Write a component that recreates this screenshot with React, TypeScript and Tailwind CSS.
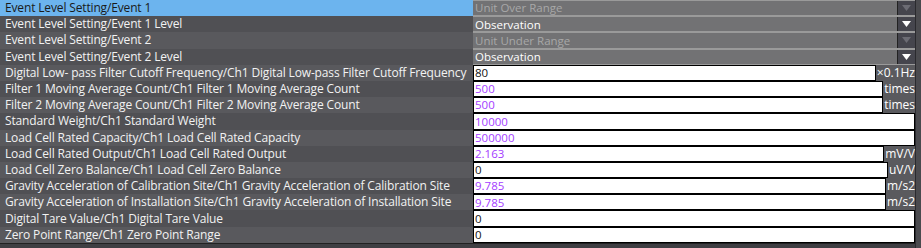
import React from "react";

type Row = {
  label: string;
  kind: "combo" | "input";
  value: string;
  disabled?: boolean;
  purple?: boolean;
  unit?: string;
};

const rows: Row[] = [
  { label: "Event Level Setting/Event 1", kind: "combo", value: "Unit Over Range", disabled: true },
  { label: "Event Level Setting/Event 1 Level", kind: "combo", value: "Observation" },
  { label: "Event Level Setting/Event 2", kind: "combo", value: "Unit Under Range", disabled: true },
  { label: "Event Level Setting/Event 2 Level", kind: "combo", value: "Observation" },
  { label: "Digital Low- pass Filter Cutoff Frequency/Ch1 Digital Low-pass Filter Cutoff Frequency", kind: "input", value: "80", unit: "×0.1Hz" },
  { label: "Filter 1 Moving Average Count/Ch1 Filter 1 Moving Average Count", kind: "input", value: "500", purple: true, unit: "times" },
  { label: "Filter 2 Moving Average Count/Ch1 Filter 2 Moving Average Count", kind: "input", value: "500", purple: true, unit: "times" },
  { label: "Standard Weight/Ch1 Standard Weight", kind: "input", value: "10000", purple: true },
  { label: "Load Cell Rated Capacity/Ch1 Load Cell Rated Capacity", kind: "input", value: "500000", purple: true },
  { label: "Load Cell Rated Output/Ch1 Load Cell Rated Output", kind: "input", value: "2.163", purple: true, unit: "mV/V" },
  { label: "Load Cell Zero Balance/Ch1 Load Cell Zero Balance", kind: "input", value: "0", unit: "uV/V" },
  { label: "Gravity Acceleration of Calibration Site/Ch1 Gravity Acceleration of Calibration Site", kind: "input", value: "9.785", purple: true, unit: "m/s2" },
  { label: "Gravity Acceleration of Installation Site/Ch1 Gravity Acceleration of Installation Site", kind: "input", value: "9.785", purple: true, unit: "m/s2" },
  { label: "Digital Tare Value/Ch1 Digital Tare Value", kind: "input", value: "0" },
  { label: "Zero Point Range/Ch1 Zero Point Range", kind: "input", value: "0" },
];

function Arrow({ disabled }: { disabled?: boolean }) {
  return (
    <svg width="9" height="6" viewBox="0 0 9 6">
      <path d="M0 0 H9 L4.5 6 Z" fill={disabled ? "#6c6c74" : "#ffffff"} />
    </svg>
  );
}

export default function App() {
  return (
    <div
      className="w-[921px] h-[248px] bg-[#3b3b3f] flex overflow-hidden leading-none"
      style={{ fontFamily: '"Open Sans", "Noto Sans", sans-serif' }}
    >
      <div className="w-[915px] flex flex-col">
        {rows.map((r, i) => (
          <div key={i} className="flex h-[16.2px]">
            {/* label */}
            <div
              className={
                "w-[473px] shrink-0 flex items-center pl-[5px] whitespace-nowrap overflow-hidden text-[12px] tracking-[-0.15px] " +
                (i === 0 ? "bg-[#6cb4ee] text-[#1a1a1a]" : i % 2 === 1 ? "bg-[#505054] text-[#f2f2f2]" : "bg-[#59595d] text-[#f2f2f2]")
              }
            >
              {r.label}
            </div>

            {/* value */}
            {r.kind === "combo" ? (
              <div className="flex-1 flex bg-[#9a9a9a] py-[1px] text-[11.5px]">
                <div
                  className={
                    "flex-1 flex items-center pl-[2px] bg-[#727274] " +
                    (r.disabled ? "text-[#a8a8a8]" : "text-white")
                  }
                >
                  {r.value}
                </div>
                <div className="w-[18px] flex items-center justify-center bg-[#45454d] border-l border-[#222]">
                  <Arrow disabled={r.disabled} />
                </div>
              </div>
            ) : (
              <div className="flex-1 flex bg-[#5a5a5e]">
                <div
                  className={
                    "flex-1 flex items-center pl-[1px] bg-white border border-black text-[11.5px] " +
                    (r.purple ? "text-[#a43cff]" : "text-[#111]")
                  }
                >
                  {r.value}
                </div>
                {r.unit && (
                  <div className="flex items-center pl-[1px] text-[12px] text-white">{r.unit}</div>
                )}
              </div>
            )}
          </div>
        ))}
        <div className="flex-1 border-t border-[#222] bg-[#3f3f43]" />
      </div>
      <div className="w-[6px] bg-[#4a4a4e] border-l border-[#2a2a2e]" />
    </div>
  );
}
